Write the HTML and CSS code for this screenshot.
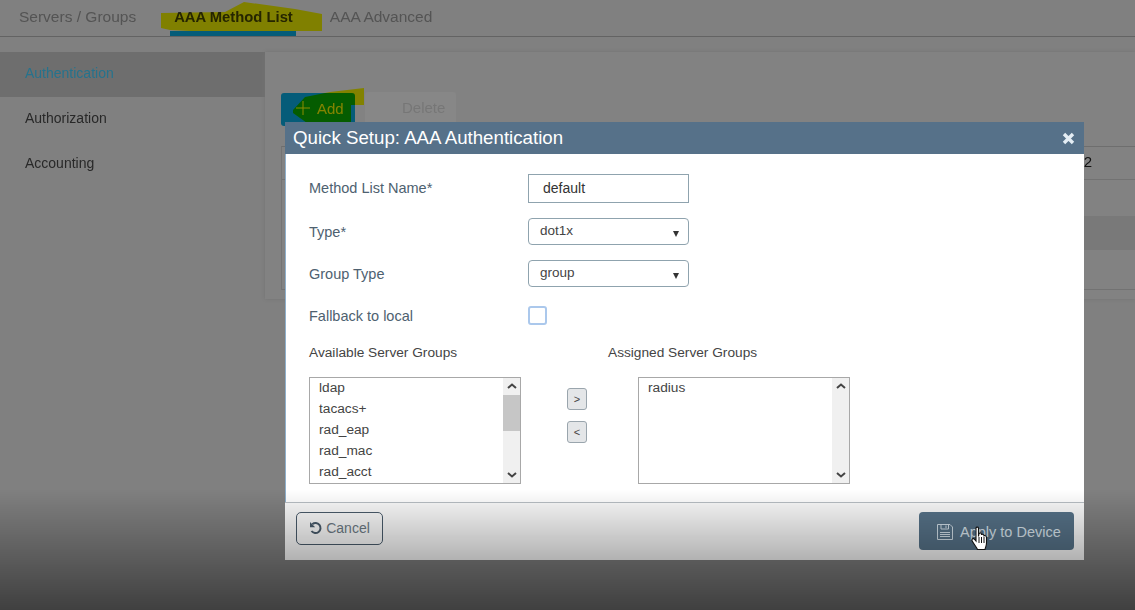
FILE: index.html
```html
<!DOCTYPE html>
<html>
    <head>
        <title>AAA Method List</title>
        <link rel="stylesheet" href="styles.css">
    </head>
    <body>
        <div class="page">
            <nav class="tabs">
                <a>Servers / Groups</a>
                <a class="active">AAA Method List</a>
                <a>AAA Advanced</a>
            </nav>
            <div class="content">
                <ul class="side">
                    <li class="active">Authentication</li>
                    <li>Authorization</li>
                    <li>Accounting</li>
                </ul>
                <div class="panel">
                    <div class="toolbar">
                        <button class="btn-add">
                            <svg width="14" height="14" viewBox="0 0 14 14"><path d="M7 0v14M0 7h14" stroke="#fff" stroke-width="1"/></svg>
                            Add
                        </button>
                        <button class="btn-delete">Delete</button>
                    </div>
                    <div class="table">
                        <div class="row head"><span>2</span></div>
                        <div class="row plain"></div>
                        <div class="row shade"></div>
                        <div class="row tall"></div>
                    </div>
                </div>
            </div>
        </div>

        <div class="backdrop"></div>

        <svg class="marker" width="1135" height="130" viewBox="0 0 1135 130">
            <path d="M161 13L225 12L244 2L295 9L322 14L322 31L296 31L190 31L170 30L161 28Z" fill="#ffff00"/>
            <path d="M293 110L305 97L330 92L364 88L364 105L351 105L351 123L307 123L293 113Z" fill="#ffff00"/>
        </svg>

        <div class="modal">
            <div class="modal-head">
                <span>Quick Setup: AAA Authentication</span>
                <svg width="13" height="13" viewBox="0 0 13 13"><path d="M2 2L11 11M11 2L2 11" stroke="#e4edf4" stroke-width="3.400"/></svg>
            </div>
            <div class="modal-body">
                <div class="form">
                    <label class="first">Method List Name*</label>
                    <input class="field" type="text" value="default">
                    <label>Type*</label>
                    <div class="select">dot1x<i></i></div>
                    <label>Group Type</label>
                    <div class="select">group<i></i></div>
                    <label class="gap-top">Fallback to local</label>
                    <span class="check gap-top"></span>
                </div>
                <div class="groups">
                    <div class="group-col left">
                        <h4>Available Server Groups</h4>
                        <div class="listbox">
                            <ul>
                                <li>ldap</li>
                                <li>tacacs+</li>
                                <li>rad_eap</li>
                                <li>rad_mac</li>
                                <li>rad_acct</li>
                            </ul>
                            <div class="scroll">
                                <svg width="10" height="6" viewBox="0 0 10 6"><path d="M1 5L5 1.500L9 5" fill="none" stroke="#444" stroke-width="2"/></svg>
                                <b class="thumb"></b>
                                <svg width="10" height="6" viewBox="0 0 10 6"><path d="M1 1L5 4.500L9 1" fill="none" stroke="#444" stroke-width="2"/></svg>
                            </div>
                        </div>
                    </div>
                    <div class="movers">
                        <button>&gt;</button>
                        <button>&lt;</button>
                    </div>
                    <div class="group-col right">
                        <h4>Assigned Server Groups</h4>
                        <div class="listbox">
                            <ul>
                                <li>radius</li>
                            </ul>
                            <div class="scroll">
                                <svg width="10" height="6" viewBox="0 0 10 6"><path d="M1 5L5 1.500L9 5" fill="none" stroke="#444" stroke-width="2"/></svg>
                                <svg width="10" height="6" viewBox="0 0 10 6"><path d="M1 1L5 4.500L9 1" fill="none" stroke="#444" stroke-width="2"/></svg>
                            </div>
                        </div>
                    </div>
                </div>
            </div>
            <div class="modal-foot">
                <button class="btn-cancel">
                    <svg width="14" height="14" viewBox="0 0 14 14"><path d="M3.300 3.200A5 5 0 1 1 2.500 10" fill="none" stroke="#4a5c6c" stroke-width="2"/><path d="M1 1L1 6.200L6.200 6.200Z" fill="#4a5c6c"/></svg>
                    Cancel
                </button>
                <button class="btn-apply">
                    <svg width="18" height="18" viewBox="0 0 18 18" fill="none" stroke="#d3e0e9" stroke-width="1"><path d="M1.500 1.500H14L16.500 4V16.500H1.500Z"/><path d="M5 1.500V6H12.500V1.500M10 2.500V5"/><path d="M4 9.500H14M4 11.500H14M4 13.500H14"/></svg>
                    Apply to Device
                </button>
            </div>
        </div>

        <div class="fade"></div>

        <svg class="hand" width="18" height="25" viewBox="0 0 18 25">
            <path d="M5 2C5 .8 7.500 .8 7.500 2V10.500L8 7.500C9 6.500 10.500 7 10.500 8.500L10.800 8.500C11.800 8 13 8.500 13 9.800C14 9.200 15.500 10 15.500 11.500V17C15.500 20 14.500 21 14 23.500H6.500C5.500 21 2 17 1 14.500C.6 13 2.200 12 3.400 13.200L5 15Z" fill="#fff" stroke="#111" stroke-width="1.100"/>
            <path d="M8 11V17M10.500 11V17M13 11V17" stroke="#111" stroke-width="1"/>
        </svg>
    </body>
</html>
```

FILE: styles.css
```css
* {box-sizing: border-box; font-family: "Liberation Sans", Arial, sans-serif;}
body {margin: 0; width: 1135px; height: 610px; overflow: hidden; position: relative; background: #e9e9e9;}
ul {list-style: none; margin: 0; padding: 0;}
button {font-family: inherit; cursor: pointer;}

.page {height: 610px; display: flex; flex-direction: column; background: #e9e9e9;}
.tabs {height: 37px; flex: none; display: flex; padding-left: 19px; gap: 38px; border-bottom: 1px solid #b5b5b5; font-size: 15.500px; color: #999;}
.tabs a {padding-top: 8px; height: 36px; position: relative;}
.tabs a.active {color: #444; font-weight: bold; font-size: 14.800px; padding-top: 9px; margin-right: -1px;}
.tabs a.active::after {content: ""; position: absolute; left: -4px; right: -3px; bottom: 0; height: 5px; background: #0aa8dc;}

.content {flex: none; display: flex; margin-top: 15px;}
.side {width: 265px; flex: none;}
.side li {height: 45px; padding: 13px 0 0 25px; font-size: 14px; color: #4a4a4a;}
.side li.active {background: #c9c9c9; color: #45d0ff;}
.panel {flex: 1; height: 247px; padding: 41px 0 0 16px; background: #ededed; box-shadow: 0 0 4px #d0d0d0;}
.toolbar {display: flex; gap: 10px; height: 33px; align-items: flex-start;}
.toolbar button {height: 33px; border: none; border-radius: 3px; font-size: 15px; color: #f0f0f0;}
.btn-add {width: 74px; background: #0aa8dc; display: flex; align-items: center; gap: 7px; padding: 0 0 3px 15px;}
.toolbar .btn-delete {width: 91px; background: #f6f6f6; margin-top: -1px; padding: 0 0 2px 37px; text-align: left; color: #d8d8d8;}
.table {margin-top: 20px; border-top: 1px solid #c8c8c8; border-left: 1px solid #d4d4d4;}
.row {text-align: right; padding-right: 43px; font-size: 15px; color: #222;}
.row.head {height: 33px; padding-top: 6px; border-bottom: 1px solid #cfcfcf;}
.row.plain {height: 36px;}
.row.shade {height: 34px; margin-left: 4px; background: #dcdcdc;}
.row.tall {height: 40px; border-bottom: 1px solid #cfcfcf;}

.backdrop {position: absolute; inset: 0; background: rgba(0, 0, 0, .45);}
.marker {position: absolute; left: 0; top: 0; mix-blend-mode: multiply;}

.modal {position: absolute; left: 285px; top: 122px; width: 799px; height: 438px; display: flex; flex-direction: column; background: #fff;}
.modal-head {height: 32px; flex: none; background: #567189; color: #fff; font-size: 18.700px; display: flex; align-items: center; justify-content: space-between; padding: 0 9px 0 8px;}
.modal-body {flex: 1; padding: 20px 0 0 23px; border-left: 1px solid #8fb0cc;}
.form {display: grid; grid-template-columns: 219px 161px; grid-template-rows: 29px 27px 27px 23px; row-gap: 15px; align-items: center; font-size: 14.500px; color: #4e6170;}
.form label.first {padding-bottom: 2px;}
.field {height: 29px; width: 161px; border: 1px solid #8fa3ae; padding: 0 14px 2px; font-size: 14px; color: #333; background: #fff;}
.select {height: 27px; border: 1px solid #8fa3ae; border-radius: 4px; padding: 4px 11px; font-size: 13.500px; color: #444; position: relative;}
.select i {position: absolute; right: 9px; top: 12px; border: 3.500px solid transparent; border-top: 6px solid #333; border-bottom: 0;}
.form .gap-top {margin-top: 4px;}
.check {width: 19px; height: 19px; border: 2px solid #abc8ec; border-radius: 3px;}

.groups {display: flex; margin-top: 20px;}
.group-col h4 {margin: 0 0 16px; height: 16px; font-size: 13.700px; font-weight: normal; color: #444;}
.group-col.left {width: 212px;}
.group-col.right {width: 242px;}
.group-col.right h4 {margin-left: -30px; white-space: nowrap;}
.listbox {height: 107px; border: 1px solid #a8a8a8; display: flex; background: #fff;}
.listbox ul {flex: 1; padding: 0 0 0 9px; font-size: 13.700px; color: #444;}
.listbox li {height: 21px; padding-top: 2px;}
.scroll {width: 17px; background: #f0f0f0; display: flex; flex-direction: column; justify-content: space-between; align-items: center; padding: 5px 0; position: relative;}
.thumb {position: absolute; left: 0; top: 17px; width: 17px; height: 36px; background: #c6c6c6;}
.group-col.right .listbox {width: 212px;}
.movers {width: 117px; padding: 43px 0 0 46px; display: flex; flex-direction: column; gap: 11px;}
.movers button {width: 20px; height: 22px; padding: 0; border: 1px solid #9aa5ad; border-radius: 3px; background: #e4e6e8; font-size: 11px; color: #444;}

.modal-foot {height: 58px; flex: none; display: flex; justify-content: space-between; align-items: flex-start; padding: 9px 10px 0 11px; border-top: 1px solid #b9bfc4; background: #fbfbfb;}
.btn-cancel {width: 87px; height: 33px; display: flex; align-items: center; justify-content: center; gap: 3px; padding: 0 0 2px; background: transparent; border: 1px solid #4a5c6c; border-radius: 5px; font-size: 14px; color: #6d7a84;}
.btn-apply {width: 155px; height: 38px; display: flex; align-items: center; gap: 6px; padding: 2px 0 0 17px; background: #577389; border: none; border-radius: 4px; font-size: 14.500px; color: #dbe7ef;}

.fade {position: absolute; left: 0; right: 0; top: 490px; height: 120px; background: linear-gradient(rgba(0, 0, 0, 0), rgba(0, 0, 0, .5));}
.hand {position: absolute; left: 971px; top: 526px;}
```
